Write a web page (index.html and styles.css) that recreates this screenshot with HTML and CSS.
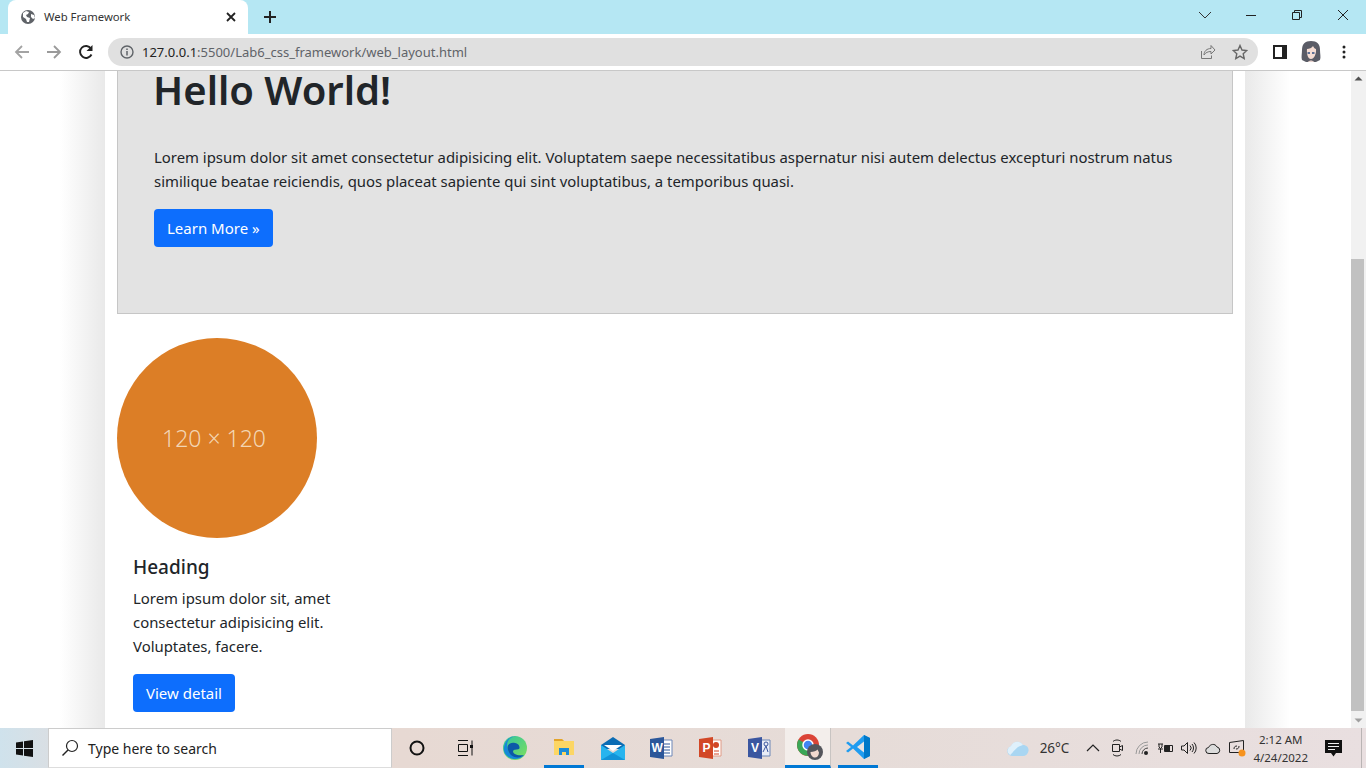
FILE: index.html
```html
<!DOCTYPE html>
<html lang="en">
<head>
    <meta charset="UTF-8">
    <title>Web Framework</title>
    <link rel="stylesheet" href="styles.css">
</head>
<body>
    <div class="tabstrip">
        <div class="tab">
            <svg class="tab-globe" width="16" height="16" viewBox="0 0 16 16"><circle cx="8" cy="8" r="7" fill="#5f6368"/><path d="M3 4l3-2 3 1-1 2-2 1 1 2 3 1-1 4-2 0-1-3-3-2zM11 5l3 1 1 3-2 1-2-2z" fill="#fff"/></svg>
            <span class="tab-title">Web Framework</span>
            <svg class="tab-close" width="10" height="10" viewBox="0 0 10 10"><path d="M1 1l8 8M9 1l-8 8" stroke="#222" stroke-width="1.8"/></svg>
        </div>
        <svg class="new-tab" width="14" height="14" viewBox="0 0 14 14"><path d="M7 1v12M1 7h12" stroke="#222" stroke-width="2"/></svg>
        <div class="window-controls">
            <svg width="46" height="12" viewBox="0 0 46 12"><path d="M17 3l6 6 6-6" fill="none" stroke="#333" stroke-width="1"/></svg>
            <svg width="46" height="12" viewBox="0 0 46 12"><path d="M18 6.500h10" stroke="#222" stroke-width="1"/></svg>
            <svg width="46" height="12" viewBox="0 0 46 12"><path d="M18.500 3.500h7v7h-7zM20.500 3.500v-2h7v7h-2" fill="none" stroke="#222" stroke-width="1"/></svg>
            <svg width="46" height="12" viewBox="0 0 46 12"><path d="M18 1l10 10M28 1l-10 10" stroke="#222" stroke-width="1"/></svg>
        </div>
    </div>

    <div class="toolbar">
        <svg class="nav-icon" width="16" height="16" viewBox="0 0 16 16"><path d="M15 8H2M8 2L2 8l6 6" fill="none" stroke="#a3a3a3" stroke-width="1.800"/></svg>
        <svg class="nav-icon" width="16" height="16" viewBox="0 0 16 16"><path d="M1 8h13M8 2l6 6-6 6" fill="none" stroke="#9a9a9a" stroke-width="1.800"/></svg>
        <svg class="nav-icon" width="16" height="16" viewBox="0 0 16 16"><path d="M13.500 10.500A6 6 0 1 1 13 4.500" fill="none" stroke="#222" stroke-width="1.900"/><path d="M14.500 1v6h-6z" fill="#222"/></svg>
        <div class="omnibox">
            <svg class="info-icon" width="14" height="14" viewBox="0 0 14 14"><circle cx="7" cy="7" r="6" fill="none" stroke="#5f6368" stroke-width="1.400"/><path d="M7 6v4.500M7 3.500v1.500" stroke="#5f6368" stroke-width="1.500"/></svg>
            <span class="url"><span class="url-host">127.0.0.1</span>:5500/Lab6_css_framework/web_layout.html</span>
            <svg class="omni-share" width="16" height="16" viewBox="0 0 16 16"><path d="M1.500 7v7.500h10v-3M4 11c0-4 3-6.500 7-6.500V1.500l4 4.500-4 4V7.500C8 7.500 5.500 8.500 4 11z" fill="none" stroke="#777" stroke-width="1"/></svg>
            <svg class="omni-star" width="16" height="16" viewBox="0 0 16 16"><path d="M8 1.500l2 4.500 4.800.5-3.600 3.200 1 4.800L8 12.100l-4.200 2.400 1-4.800L1.200 6.500 6 6z" fill="none" stroke="#666" stroke-width="1.400"/></svg>
        </div>
        <div class="side-panel"><span></span></div>
        <svg class="avatar" width="20" height="22" viewBox="0 0 20 22"><path d="M10 0c6 0 9 3 9 9 0 4 1 7 0 10l-4 2H5l-4-2C0 16 1 13 1 9c0-6 3-9 9-9z" fill="#5a5c66"/><path d="M6 8c2 0 5-1 6-3 1 2 2 3 3 3 .5 5-2 10-5 10S5.500 13 6 8z" fill="#f5ddd3"/><path d="M6.500 11h2.500v2H6.500zM11 11h2.500v2H11z" fill="#5d7196"/><path d="M7 21c1-2 5-2 6 0z" fill="#e9d4cf"/></svg>
        <svg class="menu-dots" width="4" height="14" viewBox="0 0 4 14"><circle cx="2" cy="2" r="1.500" fill="#222"/><circle cx="2" cy="7" r="1.500" fill="#222"/><circle cx="2" cy="12" r="1.500" fill="#222"/></svg>
    </div>

    <div class="viewport">
        <div class="page">
            <div class="container">
                <section class="jumbotron">
                    <h1>Hello World!</h1>
                    <p>Lorem ipsum dolor sit amet consectetur adipisicing elit. Voluptatem saepe necessitatibus aspernatur nisi autem delectus excepturi nostrum natus similique beatae reiciendis, quos placeat sapiente qui sint voluptatibus, a temporibus quasi.</p>
                    <a class="btn" href="#">Learn More »</a>
                </section>
                <div class="placeholder">120 × 120</div>
                <div class="card-text">
                    <h2>Heading</h2>
                    <p>Lorem ipsum dolor sit, amet consectetur adipisicing elit. Voluptates, facere.</p>
                    <a class="btn" href="#">View detail</a>
                </div>
            </div>
        </div>
        <div class="scrollbar">
            <svg width="15" height="15" viewBox="0 0 15 15"><path d="M3.500 9.500l4-4 4 4z" fill="#505050"/></svg>
            <div class="scroll-track"><div class="scroll-thumb"></div></div>
            <svg width="15" height="15" viewBox="0 0 15 15"><path d="M3.500 5.500l4 4 4-4z" fill="#a0a0a0"/></svg>
        </div>
    </div>

    <div class="taskbar">
        <div class="start">
            <svg width="17" height="17" viewBox="0 0 17 17"><path d="M0 2.500l7-1v6.500H0zM8 1.300L17 0v8H8zM0 9h7v6.500l-7-1zM8 9h9v8l-9-1.300z" fill="#111"/></svg>
        </div>
        <div class="search-box">
            <svg width="18" height="18" viewBox="0 0 18 18"><circle cx="11" cy="7" r="5.500" fill="none" stroke="#222" stroke-width="1.200"/><path d="M7 11l-5.500 5.500" stroke="#222" stroke-width="1.400"/></svg>
            <span>Type here to search</span>
        </div>
        <div class="task-icons">
            <div class="task-item"><svg width="16" height="16" viewBox="0 0 16 16"><circle cx="8" cy="8" r="6.500" fill="none" stroke="#111" stroke-width="2"/></svg></div>
            <div class="task-item"><svg width="18" height="16" viewBox="0 0 18 16"><path d="M1 .500h10M1 15.500h10M1.500 4.500h9v7h-9zM15 .500v15" fill="none" stroke="#111" stroke-width="1"/><path d="M13 5h3v3h-3z" fill="#111"/></svg></div>
            <div class="task-item"><svg width="24" height="24" viewBox="0 0 24 24"><defs><linearGradient id="edgeA" x1="0" y1="0" x2="1" y2="1"><stop offset="0" stop-color="#2fc4a0"/><stop offset="1" stop-color="#7fe05c"/></linearGradient></defs><circle cx="12" cy="12" r="12" fill="url(#edgeA)"/><path d="M1 15C0 7 6 0 13 0c-6 1-11 5-8 14 2 6 10 9 16 5-4 6-17 6-20-4z" fill="#1589d8"/><path d="M5 14C3 8 8 6 12 7c5 1 5 5 4 6-3 1-5 0-6 2 0 3 4 5 11 4-6 5-14 2-16-5z" fill="#0c59a8"/></svg></div>
            <div class="task-item active-line"><svg width="22" height="20" viewBox="0 0 22 20"><path d="M1 2h8l2 2h10v14H1z" fill="#fcd664"/><path d="M1 2h8l2 2H1z" fill="#e3a42a"/><path d="M6 11h10v7h-3v-3H9v3H6z" fill="#1a8cd8"/></svg></div>
            <div class="task-item"><svg width="24" height="23" viewBox="0 0 24 23"><path d="M0 8L12 0l12 8v4H0z" fill="#0b6cb4"/><path d="M3 8h18l-9 6z" fill="#fff"/><path d="M0 8l12 8 12-8v15H0z" fill="#27b4ee"/><path d="M0 23l12-7 12 7z" fill="#1293d8"/></svg></div>
            <div class="task-item"><svg width="23" height="22" viewBox="0 0 23 22"><path d="M12 3h10v16H12z" fill="#fff" stroke="#6d87b8"/><path d="M14 7h6M14 10h6M14 13h6M14 16h6" stroke="#2b579a"/><path d="M0 2l14-2v22L0 20z" fill="#2b579a"/><text class="app-letter" x="1.500" y="15">W</text></svg></div>
            <div class="task-item"><svg width="23" height="22" viewBox="0 0 23 22"><path d="M12 3h10v16H12z" fill="#fff" stroke="#e09a85"/><path d="M15 14h5M15 17h5" stroke="#d24726"/><circle cx="17" cy="8" r="3" fill="#d24726"/><path d="M0 2l14-2v22L0 20z" fill="#d24726"/><text class="app-letter" x="3.500" y="15">P</text></svg></div>
            <div class="task-item"><svg width="23" height="22" viewBox="0 0 23 22"><path d="M12 3h10v16H12z" fill="#e8ecf6" stroke="#6d87b8"/><circle cx="18" cy="7" r="2" fill="none" stroke="#3a56a0"/><path d="M15 15l3-6 2 6" fill="none" stroke="#3a56a0"/><path d="M0 2l14-2v22L0 20z" fill="#3a56a0"/><text class="app-letter" x="3" y="15">V</text></svg></div>
            <div class="task-item chrome-item"><svg width="26" height="26" viewBox="0 0 26 26"><circle cx="11" cy="11" r="11" fill="#db4437"/><path d="M11 11L1.500 5.500A11 11 0 0 0 11 22z" fill="#3aa757"/><path d="M11 11h11a11 11 0 0 1-11 11z" fill="#fbc02d"/><circle cx="11" cy="11" r="5" fill="#4285f4" stroke="#fff" stroke-width="1.500"/><circle cx="18" cy="18" r="8" fill="#55565c"/><path d="M13.500 18c3 0 6-1 7-2.500l1.500 3c0 3-2 5-4 5s-4.500-2-4.500-5.500z" fill="#f3d9cf"/></svg></div>
            <div class="task-item vscode-item"><svg width="26" height="26" viewBox="0 0 26 26"><path d="M19 1l6 3v18l-6 3L8 14.500 3 18.500l-2-1.500 5-4-5-4 2-1.500 5 4z" fill="#1f9cf0"/><path d="M19 1l6 3v18l-6 3z" fill="#0078c8"/><path d="M19 7.500L12 13l7 5.500z" fill="#e9e3e3"/></svg></div>
        </div>
        <div class="tray">
            <svg class="tray-cloud" width="22" height="16" viewBox="0 0 22 16"><path d="M5 16a5 5 0 0 1-1-9.800C6 1 13 0 16 5c4 0 6 3 5.500 6-.5 3-3 5-5.500 5z" fill="#a9d6f2"/><path d="M3 15c3-2 5-8 13-10-3-5-10-4-12 1a5 5 0 0 0-1 9z" fill="#dff0fb"/></svg>
            <span class="temp">26°C</span>
            <svg class="tray-chevron" width="14" height="8" viewBox="0 0 14 8"><path d="M1 7l6-6 6 6" fill="none" stroke="#222" stroke-width="1.200"/></svg>
            <svg class="tray-cam" width="14" height="18" viewBox="0 0 14 18"><path d="M3 2.500c2-2 6-2 8 0M3 15.500c2 2 6 2 8 0" fill="none" stroke="#222"/><path d="M2.500 5.500h7v7h-7zM9.500 8l3-1.500v5l-3-1.500" fill="none" stroke="#222"/></svg>
            <svg class="tray-wifi" width="16" height="14" viewBox="0 0 16 14"><path d="M1 13A12 12 0 0 1 13 1M4 13A9 9 0 0 1 13 4" fill="none" stroke="#999"/><path d="M7 13a6 6 0 0 1 6-6" fill="none" stroke="#444"/><circle cx="11" cy="12" r="2" fill="#222"/></svg>
            <svg class="tray-battery" width="17" height="14" viewBox="0 0 17 14"><path d="M1 3h5M1 8h5M2 3v3l1.500 1.500L5 6V3M3.500 7.500V12" fill="none" stroke="#222"/><path d="M7.500 4.500h8v6h-8z" fill="none" stroke="#222"/><path d="M8 5h5v5H8z" fill="#222"/></svg>
            <svg class="tray-volume" width="17" height="14" viewBox="0 0 17 14"><path d="M1.500 5h2.500l3.500-3.500v11L4 9H1.500z" fill="none" stroke="#222"/><path d="M10 4.500a3.500 3.500 0 0 1 0 5M12 3a6 6 0 0 1 0 8M14 1.500a8 8 0 0 1 0 11" fill="none" stroke="#222"/></svg>
            <svg class="tray-onedrive" width="16" height="11" viewBox="0 0 16 11"><path d="M4 10.500a3 3 0 0 1-.5-6C5 1 10 0 12 4a3.300 3.300 0 0 1 0 6.500z" fill="#dcdcdc" stroke="#222"/></svg>
            <svg class="tray-sync" width="17" height="17" viewBox="0 0 17 17"><path d="M.5 2.500l14-2v12h-14z" fill="none" stroke="#222"/><path d="M5 9c0-2 1-3 3-3M10 6c0 2-1 3-3 3" fill="none" stroke="#222"/><circle cx="13" cy="13" r="3.500" fill="#f7931e"/></svg>
            <div class="clock"><span>2:12 AM</span><span>4/24/2022</span></div>
            <svg class="tray-notify" width="17" height="17" viewBox="0 0 17 17"><path d="M0 0h17v13h-6l-2.500 3.500L6 13H0z" fill="#111"/><path d="M3 3.500h11M3 6.500h11M3 9.500h7" stroke="#eee"/></svg>
            <div class="show-desktop"></div>
        </div>
    </div>
</body>
</html>
```

FILE: styles.css
```css
* {
    box-sizing: border-box;
}

html, body {
    height: 100%;
}

body {
    margin: 0;
    width: 1366px;
    height: 768px;
    overflow: hidden;
    display: flex;
    flex-direction: column;
    font-family: "Noto Sans", "Open Sans", Arial, sans-serif;
    color: #212529;
    background-color: #fff;
}

/* browser chrome */
.tabstrip {
    height: 34px;
    flex: none;
    display: flex;
    align-items: flex-start;
    padding-left: 8px;
    background-color: #b5e7f3;
}

.tab {
    width: 240px;
    height: 34px;
    display: flex;
    align-items: center;
    padding: 0 12px;
    background-color: #fff;
    border-radius: 8px 8px 0 0;
}

.tab-title {
    flex: 1;
    margin-left: 8px;
    margin-bottom: 2px;
    font-size: 11.300px;
    color: #333;
}

.new-tab {
    margin: 10px 0 0 15px;
}

.window-controls {
    display: flex;
    margin-left: auto;
    margin-top: 9px;
}

.toolbar {
    height: 37px;
    flex: none;
    display: flex;
    align-items: center;
    padding-left: 14px;
    background-color: #fff;
    border-bottom: 1px solid #c8c8c8;
}

.nav-icon {
    margin-right: 16px;
}

.omnibox {
    width: 1150px;
    height: 28px;
    margin-left: -2px;
    display: flex;
    align-items: center;
    padding-left: 12px;
    background-color: #e0e0e0;
    border-radius: 14px;
}

.url {
    flex: 1;
    margin-left: 8px;
    font-size: 13px;
    color: #5f6368;
}

.url-host {
    color: #222;
}

.omni-share {
    margin-right: 16px;
}

.omni-star {
    margin-right: 10px;
}

.side-panel {
    width: 14px;
    height: 14px;
    margin-left: 15px;
    padding: 2px 5px 2px 2px;
    background-color: #222;
}

.side-panel span {
    display: block;
    width: 100%;
    height: 100%;
    background-color: #fff;
}

.avatar {
    margin-left: 14px;
}

.menu-dots {
    margin-left: 21px;
}

/* page area */
.viewport {
    flex: 1;
    min-height: 0;
    display: flex;
    overflow: hidden;
}

.page {
    flex: 1;
    display: flex;
    justify-content: center;
    overflow: hidden;
    background: linear-gradient(to right, #fff 60px, #e9e9e9 105px, #e9e9e9 1245px, #fff 1290px);
}

.container {
    width: 1140px;
    margin-right: 1px;
    padding: 0 12px;
    background-color: #fff;
}

.jumbotron {
    height: 243px;
    padding: 0 36px;
    background-color: #e3e3e3;
    border: 1px solid #c6c6c6;
    border-top: none;
}

h1 {
    margin: 0 0 0 -1px;
    font-size: 40px;
    font-weight: 600;
    line-height: 38px;
}

.jumbotron p {
    margin: 36px 0 16px;
    font-size: 14.900px;
    line-height: 24px;
}

.btn {
    display: inline-block;
    height: 38px;
    padding: 0 13px;
    font-size: 15px;
    line-height: 38px;
    color: #fff;
    text-decoration: none;
    background-color: #0d6efd;
    border-radius: 4px;
}

.placeholder {
    width: 200px;
    height: 200px;
    margin-top: 24px;
    padding-right: 6px;
    display: flex;
    align-items: center;
    justify-content: center;
    font-size: 23px;
    font-weight: 300;
    color: #f3d6b4;
    background-color: #dc7e26;
    border-radius: 50%;
}

.card-text {
    width: 240px;
    padding: 16px 16px 0;
}

h2 {
    margin: 0 0 6px;
    font-size: 19px;
    font-weight: 500;
    line-height: 26px;
}

.card-text p {
    margin: 0 0 16px;
    font-size: 14.900px;
    line-height: 24px;
}

.scrollbar {
    width: 15px;
    flex: none;
    display: flex;
    flex-direction: column;
    background-color: #f1f1f1;
}

.scroll-track {
    flex: 1;
    display: flex;
    flex-direction: column;
    justify-content: flex-end;
    padding: 0 2px 2px 0;
}

.scroll-thumb {
    height: 452px;
    background-color: #c1c1c1;
}

/* windows taskbar */
.taskbar {
    height: 40px;
    flex: none;
    display: flex;
    align-items: center;
    background: linear-gradient(to right, #cfe2ec 0, #d9dfe4 48px, #e7d9d3 400px, #e6dcd8 850px, #e9dfe0 100%);
}

.start {
    width: 48px;
    display: flex;
    justify-content: center;
}

.search-box {
    width: 344px;
    height: 40px;
    display: flex;
    align-items: center;
    padding-left: 12px;
    font-size: 14px;
    color: #222;
    background-color: #fff;
    border: 1px solid #ccc;
    border-bottom-color: #ddd;
}

.search-box span {
    margin-left: 9px;
}

.task-icons {
    display: flex;
    height: 40px;
}

.task-item {
    width: 49px;
    height: 40px;
    display: flex;
    align-items: center;
    justify-content: center;
}

.active-line {
    width: 40px;
    margin: 0 4px 0 5px;
    border-bottom: 3px solid #0078d4;
}

.chrome-item {
    width: 46px;
    margin: 0 2px 0 1px;
    padding-left: 4px;
    background-color: #f3eeeb;
    border-bottom: 3px solid #0078d4;
    border-right: 1px solid #c8c4c2;
}

.vscode-item {
    width: 40px;
    margin-left: 5px;
    border-bottom: 3px solid #0078d4;
}

.app-letter {
    font-family: "Liberation Sans", Arial, sans-serif;
    font-size: 12px;
    font-weight: 700;
    fill: #fff;
}

.tray {
    margin-left: auto;
    height: 40px;
    display: flex;
    align-items: center;
}

.temp {
    margin-left: 11px;
    font-size: 13.500px;
    color: #333;
}

.tray-chevron {
    margin-left: 17px;
}

.tray-cam {
    margin-left: 10px;
}

.tray-wifi {
    margin-left: 11px;
}

.tray-battery {
    margin-left: 6px;
}

.tray-volume {
    margin-left: 6px;
}

.tray-onedrive {
    margin-left: 8px;
}

.tray-sync {
    margin-left: 8px;
}

.clock {
    display: flex;
    flex-direction: column;
    align-items: center;
    margin-left: 7px;
    padding-top: 1px;
    font-size: 11.500px;
    line-height: 18px;
    color: #333;
}

.tray-notify {
    margin-left: 17px;
}

.show-desktop {
    width: 5px;
    height: 40px;
    margin-left: 19px;
    border-left: 1px solid #b9b4b4;
}
```
